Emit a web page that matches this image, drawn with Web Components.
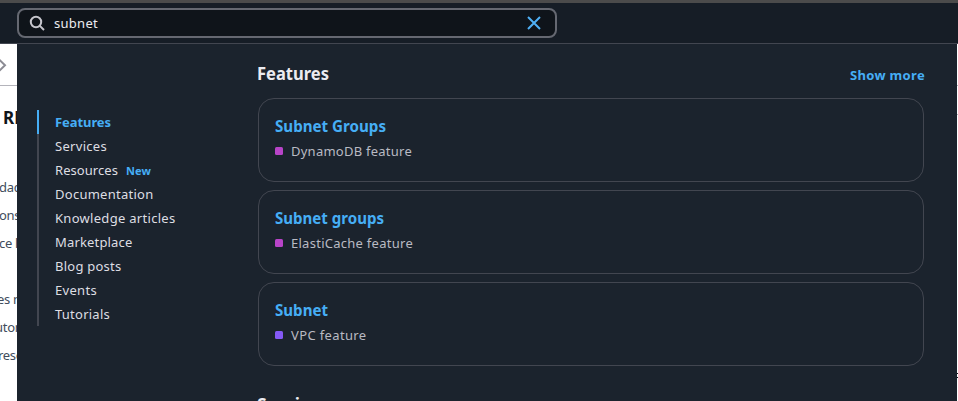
<!DOCTYPE html>
<html lang="en"><head><meta charset="utf-8"><title>Search</title>
<style>html,body{margin:0;height:401px;overflow:hidden;background:#fff;font-family:"Noto Sans","Open Sans",sans-serif}</style></head>
<body><search-page></search-page>
<script>
const define=(name,html,init)=>customElements.define(name,class extends HTMLElement{
  connectedCallback(){
    if(this.shadowRoot)return;
    const t=document.createElement('template');t.innerHTML=html;
    this.attachShadow({mode:'open'}).append(t.content.cloneNode(true));
    if(init)init(this,this.shadowRoot);
  }
});
// Text run set to a fixed advance width, by tracking or by horizontal scale.
define('fit-text',`<style>:host{display:inline-block;white-space:nowrap}span{display:inline-block;transform-origin:0 50%}</style><span><slot></slot></span>`,(el,root)=>{
  const s=root.querySelector('span'),w=+el.getAttribute('width'),n=el.textContent.length,m=s.getBoundingClientRect().width;
  el.style.width=w+'px';
  if(el.hasAttribute('scale'))s.style.transform='scaleX('+w/m+')';
  else s.style.letterSpacing=(w-m)/n+'px';
});
define('search-field',`<style>
:host{display:flex;align-items:center;box-sizing:border-box;width:540px;height:30px;border:2px solid #656871;border-radius:8px;background:#0f141a;padding:0 13px 0 10px;color:#ebebf0;font-size:13px}
svg{display:block;flex:none}.q{flex:1;padding-left:9px;line-height:20px}</style>
<svg width="16" height="16" viewBox="0 0 16 16" fill="none" stroke="#c6c6cd" stroke-width="2"><circle cx="7" cy="7" r="5.2"/><path d="M10.6 10.6 15 15"/></svg>
<div class="q"><slot></slot></div>
<svg width="16" height="16" viewBox="0 0 16 16" fill="none" stroke="#4fb0f5" stroke-width="2"><path d="m2 2 12 12M14 2 2 14"/></svg>`);
define('nav-item',`<style>:host{display:flex;height:24px;line-height:24px;box-sizing:border-box;border-left:2px solid #424650;padding-left:16px;color:#dedee3;font-size:13px}
:host([active]){border-color:#46aef5;color:#46aef5;font-weight:700}
::slotted(.new){margin-left:8px;color:#46aef5;font-size:11px;font-weight:700;padding-top:1px;height:23px}</style><slot></slot>`);
define('result-card',`<style>:host{display:block;box-sizing:border-box;height:84px;border:1px solid #424650;border-radius:16px;padding:15px 16px}
.t{height:25px;line-height:24px;font-size:16px;font-weight:700;color:#46aef5}
.d{display:flex;align-items:center;gap:8px;height:24px;line-height:24px;font-size:13px;color:#b9bac3}
i{width:8px;height:8px;border-radius:1.5px;background:var(--dot)}</style>
<div class="t"><slot name="title"></slot></div><div class="d"><i></i><slot></slot></div>`);
define('page-behind',`<style>:host{display:block;width:17px;overflow:hidden;background:#fff;color:#414d5c;font-size:13px;flex:none}
.bar{height:42px;box-sizing:border-box;border-bottom:1px solid #b4b4bb}svg{display:block;padding-top:13px}
h2{margin:18px 0 0 3px;font-size:17px;line-height:28px;color:#0f141a;white-space:nowrap}
p{margin:0;line-height:28px;height:28px;white-space:nowrap;letter-spacing:-.3px;text-indent:-1px}</style>
<div class="bar"><svg width="8" height="16" viewBox="0 0 8 16" fill="none" stroke="#8c8c94" stroke-width="2"><path d="M-1 2.5 5 8.2-1 14"/></svg></div>
<h2>RD</h2><p style="margin-top:41px">dac</p><p>ons</p><p>ce l</p><p style="margin-top:28px;text-indent:-3px">es n</p><p style="text-indent:-5px">utor</p><p style="text-indent:-2px">rese</p>`);
define('results-panel',`<style>
:host{display:flex;width:940px;flex:none;overflow:hidden;background:#1b232d}
nav{width:203px;padding:66px 0 0 20px;box-sizing:border-box;flex:none}
main{width:666px;padding:14px 0 0 38px}
header{display:flex;justify-content:space-between;align-items:center;height:30px;width:668px;margin-left:-1px}
.h{font-size:17px;font-weight:700;color:#ebebf0}.m{font-size:13px;font-weight:700;color:#46aef5;padding-top:3px}
.cards{display:flex;flex-direction:column;gap:8px;margin-top:10px}
.next{margin:23px 0 0 -1px;line-height:32px}</style>
<nav>
<nav-item active><fit-text width="56">Features</fit-text></nav-item>
<nav-item><fit-text width="52">Services</fit-text></nav-item>
<nav-item><fit-text width="63">Resources</fit-text><fit-text class="new" width="25">New</fit-text></nav-item>
<nav-item><fit-text width="98.5">Documentation</fit-text></nav-item>
<nav-item><fit-text width="120.5">Knowledge articles</fit-text></nav-item>
<nav-item><fit-text width="77.5">Marketplace</fit-text></nav-item>
<nav-item><fit-text width="66.5">Blog posts</fit-text></nav-item>
<nav-item><fit-text width="42">Events</fit-text></nav-item>
<nav-item><fit-text width="55">Tutorials</fit-text></nav-item>
</nav>
<main><header><fit-text class="h" scale width="72">Features</fit-text><fit-text class="m" width="75">Show more</fit-text></header>
<div class="cards">
<result-card style="--dot:#b844c8"><fit-text slot="title" scale width="111">Subnet Groups</fit-text><fit-text width="121">DynamoDB feature</fit-text></result-card>
<result-card style="--dot:#b844c8"><fit-text slot="title" scale width="109">Subnet groups</fit-text><fit-text width="122">ElastiCache feature</fit-text></result-card>
<result-card style="--dot:#8459f5"><fit-text slot="title" scale width="53">Subnet</fit-text><fit-text width="75.5">VPC feature</fit-text></result-card>
</div><div class="h next"><fit-text scale width="71">Services</fit-text></div></main>`);
define('search-page',`<style>
:host{display:flex;flex-direction:column;width:958px;height:401px;overflow:hidden}
.top{height:44px;box-sizing:border-box;flex:none;background:#161d26;border-top:3px solid #4b4b4b;border-bottom:1px solid #424650;padding:5px 0 0 17px}
.body{display:flex;flex:1;min-height:0}
.edge{width:1px;background:linear-gradient(#fff 41px,#b4b4bb 41px 42px,#fff 42px 70px,#b4b4bb 70px 71px,#fff 71px 329px,#0f141a 329px 330px,#fff 330px 333px,#0f141a 333px 334px,#fff 334px)}
</style><div class="top"><search-field><fit-text width="44">subnet</fit-text></search-field></div>
<div class="body"><page-behind></page-behind><results-panel></results-panel><div class="edge"></div></div>`);
</script></body></html>
